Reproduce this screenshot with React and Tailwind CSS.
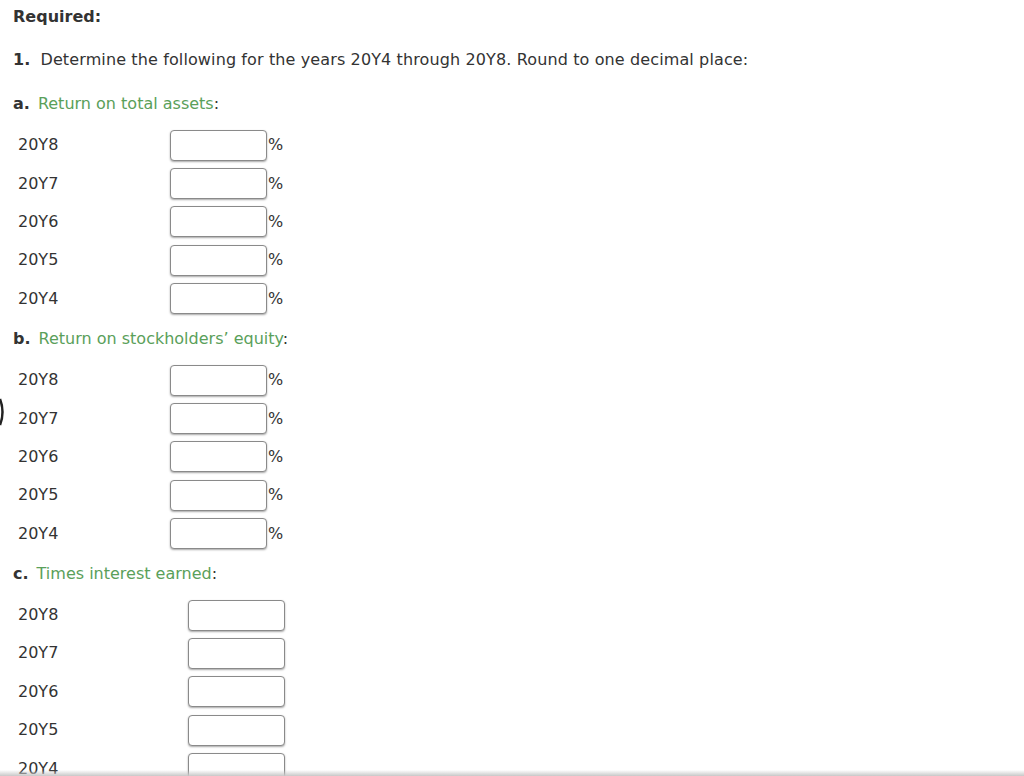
const years = ["20Y8", "20Y7", "20Y6", "20Y5", "20Y4"];

function Row({ label, percent }) {
  return (
    <div className="flex h-[38.4px] items-center">
      <span className="w-[157px] pl-[5px]">{label}</span>
      {!percent && <span className="w-[18px]" />}
      <input
        type="text"
        className="h-[31px] w-[97px] rounded-[4px] border border-[#8a8a8a] bg-white shadow-[0_1px_2px_rgba(0,0,0,0.35)] outline-none"
      />
      {percent && <span className="ml-[1px]">%</span>}
    </div>
  );
}

function Part({ letter, title, percent }) {
  return (
    <div>
      <p className="mb-[12px]">
        <b>{letter}.</b>
        <span className="ml-[8px] text-[#5aa05a]">{title}</span>:
      </p>
      {years.map((y) => (
        <Row key={y} label={y} percent={percent} />
      ))}
    </div>
  );
}

export default function App() {
  return (
    <div className="relative min-h-screen bg-white px-[13px] pt-[7px] text-[16px] leading-[20px] text-[#333] [font-family:'DejaVu_Sans',Verdana,sans-serif]">
      <p className="font-bold">Required:</p>
      <p className="mt-[23px] tracking-[0.12px]">
        <b>1.</b>
        <span className="ml-[10px]">Determine the following for the years 20Y4 through 20Y8. Round to one decimal place:</span>
      </p>

      <div className="mt-[24px] flex flex-col gap-[11px]">
        <Part letter="a" title="Return on total assets" percent />
        <Part letter="b" title="Return on stockholders’ equity" percent />
        <Part letter="c" title="Times interest earned" />
      </div>

      {/* edge of a side bracket */}
      <svg className="absolute left-0 top-[398px]" width="5" height="28" viewBox="0 0 5 28">
        <path d="M0 1 Q5 14 0 27" stroke="#222" strokeWidth="2.5" fill="none" />
      </svg>

      <div className="pointer-events-none fixed bottom-0 left-0 right-0 h-[6px] bg-gradient-to-b from-transparent to-[#c8c8c8]" />
    </div>
  );
}
